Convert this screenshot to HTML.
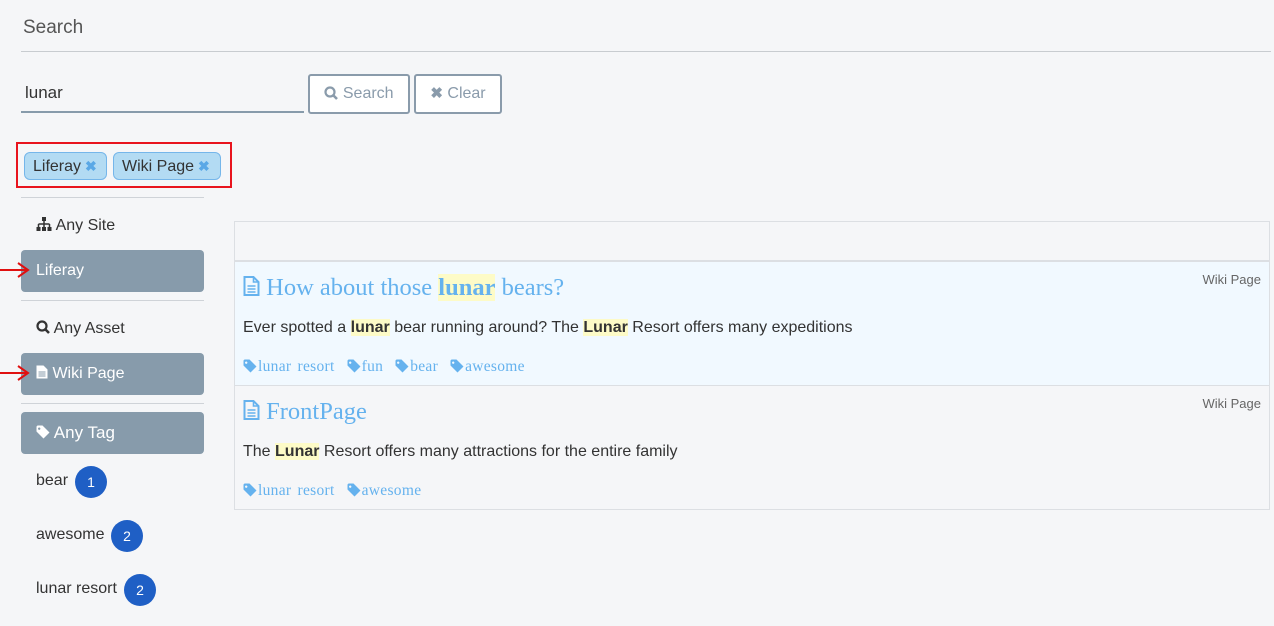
<!DOCTYPE html>
<html><head><meta charset="utf-8"><style>
body{margin:0;width:1274px;height:626px;background:#f5f6f8;font-family:"Liberation Sans",sans-serif;position:relative;overflow:hidden;color:#333}
.a{position:absolute}
.btn{position:absolute;border:2px solid #8a9bab;border-radius:3px;background:#fff;color:#8a9bab;font-size:16px;box-sizing:border-box;height:40px;line-height:36px;text-align:center}
.chip{position:absolute;top:152px;height:28px;box-sizing:border-box;border:1px solid #75b6ea;border-radius:6px;background:#b3dbf3;color:#333;font-size:16px;line-height:26px;padding-left:8px}
.chip b{color:#5aa8e6;font-size:14px;margin-left:4px}
.hr{position:absolute;left:21px;width:183px;height:1px;background:#cfd3d8}
.sel{position:absolute;left:21px;width:183px;height:42px;background:#879bab;border-radius:4px;color:#fff;font-size:16px;line-height:42px;box-sizing:border-box;padding-left:15px}
.lbl{position:absolute;left:36px;font-size:16px;color:#333}
.badge{position:absolute;width:32px;height:32px;border-radius:50%;background:#1f5fc5;color:#fff;font-size:14px;text-align:center;line-height:32px}
.title{position:absolute;left:243px;font-family:"Liberation Serif",serif;font-size:24.5px;color:#65b2ee}
.hl{background:#fdfbc7}
.title .hl{font-weight:bold}
.desc{position:absolute;left:243px;font-size:16px;color:#333}
.desc b{background:#fdfbc7}
.tags{position:absolute;left:243px;font-family:"Liberation Serif",serif;font-size:15.5px;color:#65b2ee;word-spacing:2px;letter-spacing:0.3px}
.tags span{margin-right:12px}
.tags svg{vertical-align:-2px;margin-right:1px}
.type{position:absolute;right:13px;font-size:13px;color:#666}
.arrow{position:absolute;left:0}
</style></head><body>
<svg width="0" height="0" style="position:absolute"><defs><symbol id="tag" viewBox="0 0 14 14"><path d="M0.5 1.5v5l7 7 6-6-7-7h-5zM3.2 2.5a1.2 1.2 0 1 0 0.01 0z" fill="currentColor" fill-rule="evenodd"/></symbol></defs></svg>
<div class="a" style="left:23px;top:17px;font-size:19px;color:#555">Search</div>
<div class="a" style="left:21px;top:51px;width:1250px;height:1px;background:#c8ccd0"></div>
<div class="a" style="left:25px;top:83px;font-size:17px;color:#333">lunar</div>
<div class="a" style="left:21px;top:111px;width:283px;height:2px;background:#879bab"></div>
<div class="btn" style="left:308px;top:74px;width:102px"><svg width="14" height="14" viewBox="0 0 14 14" style="vertical-align:-2px"><circle cx="6" cy="6" r="4.5" fill="none" stroke="#8a9bab" stroke-width="2.2"/><path d="M9 9l4 4" stroke="#8a9bab" stroke-width="2.6"/></svg> Search</div>
<div class="btn" style="left:414px;top:74px;width:88px"><b style="font-size:15px">✖</b> Clear</div>
<div class="a" style="left:16px;top:142px;width:212px;height:42px;border:2px solid #e8141e"></div>
<div class="chip" style="left:24px;width:83px">Liferay<b>✖</b></div>
<div class="chip" style="left:113px;width:108px">Wiki Page<b>✖</b></div>
<div class="hr" style="top:197px"></div>
<div class="lbl" style="top:217px"><svg width="16" height="14" viewBox="0 0 16 14" style="vertical-align:-1px"><rect x="6" y="0" width="4" height="4" fill="#333"/><path d="M8 4v3M2.5 7h11M2.5 7v3M8 7v3M13.5 7v3" stroke="#333" stroke-width="1.5" fill="none"/><rect x="0.5" y="10" width="4" height="4" fill="#333"/><rect x="6" y="10" width="4" height="4" fill="#333"/><rect x="11.5" y="10" width="4" height="4" fill="#333"/></svg> Any Site</div>
<div class="sel" style="top:250px">Liferay</div>
<svg class="arrow" style="top:262px" width="30" height="16" viewBox="0 0 30 16"><path d="M0 8h28M18 1l10 7-10 7" stroke="#e01010" stroke-width="2" fill="none"/></svg>
<div class="hr" style="top:300px"></div>
<div class="lbl" style="top:320px"><svg width="14" height="14" viewBox="0 0 14 14" style="vertical-align:-1px"><circle cx="6" cy="6" r="4.5" fill="none" stroke="#333" stroke-width="2.2"/><path d="M9 9l4 4" stroke="#333" stroke-width="2.6"/></svg> Any Asset</div>
<div class="sel" style="top:353px"><svg width="12" height="14" viewBox="0 0 12 14" style="vertical-align:-1px"><path d="M0.5 0.5h7l4 4v9h-11z" fill="#fff"/><path d="M2.5 7h7M2.5 9h7M2.5 11h7" stroke="#879bab" stroke-width="1"/></svg> Wiki Page</div>
<svg class="arrow" style="top:365px" width="30" height="16" viewBox="0 0 30 16"><path d="M0 8h28M18 1l10 7-10 7" stroke="#e01010" stroke-width="2" fill="none"/></svg>
<div class="hr" style="top:403px"></div>
<div class="sel" style="top:412px;font-size:17px;color:#fff"><svg width="14" height="14" style="vertical-align:-1px;color:#fff"><use href="#tag"/></svg> Any Tag</div>
<div class="lbl" style="top:472px">bear</div><div class="badge" style="left:75px;top:466px">1</div>
<div class="lbl" style="top:526px">awesome</div><div class="badge" style="left:111px;top:520px">2</div>
<div class="lbl" style="top:580px">lunar resort</div><div class="badge" style="left:124px;top:574px">2</div>

<div class="a" style="left:234px;top:221px;width:1034px;height:287px;border:1px solid #dcdfe3"></div>
<div class="a" style="left:235px;top:260px;width:1034px;height:2px;background:#dcdfe3"></div>
<div class="a" style="left:235px;top:262px;width:1034px;height:123px;background:#f1f9ff"></div>
<div class="a" style="left:235px;top:385px;width:1034px;height:1px;background:#dcdfe3"></div>

<div class="title" style="top:274px"><svg width="17" height="20" viewBox="0 0 16 20" style="vertical-align:-1px"><path d="M1 1h9l5 5v13H1z" fill="none" stroke="#65b2ee" stroke-width="2"/><path d="M10 1v5h5M4 10h8M4 13h8M4 16h8" stroke="#65b2ee" stroke-width="1.6" fill="none"/></svg> How about those <span class="hl">lunar</span> bears?</div>
<div class="type" style="top:272px">Wiki Page</div>
<div class="desc" style="top:319px">Ever spotted a <b>lunar</b> bear running around? The <b>Lunar</b> Resort offers many expeditions</div>
<div class="tags" style="top:358px"><span><svg width="14" height="14"><use href="#tag"/></svg>lunar resort</span><span><svg width="14" height="14"><use href="#tag"/></svg>fun</span><span><svg width="14" height="14"><use href="#tag"/></svg>bear</span><span><svg width="14" height="14"><use href="#tag"/></svg>awesome</span></div>

<div class="title" style="top:398px"><svg width="17" height="20" viewBox="0 0 16 20" style="vertical-align:-1px"><path d="M1 1h9l5 5v13H1z" fill="none" stroke="#65b2ee" stroke-width="2"/><path d="M10 1v5h5M4 10h8M4 13h8M4 16h8" stroke="#65b2ee" stroke-width="1.6" fill="none"/></svg> FrontPage</div>
<div class="type" style="top:396px">Wiki Page</div>
<div class="desc" style="top:443px">The <b>Lunar</b> Resort offers many attractions for the entire family</div>
<div class="tags" style="top:482px"><span><svg width="14" height="14"><use href="#tag"/></svg>lunar resort</span><span><svg width="14" height="14"><use href="#tag"/></svg>awesome</span></div>
</body></html>
